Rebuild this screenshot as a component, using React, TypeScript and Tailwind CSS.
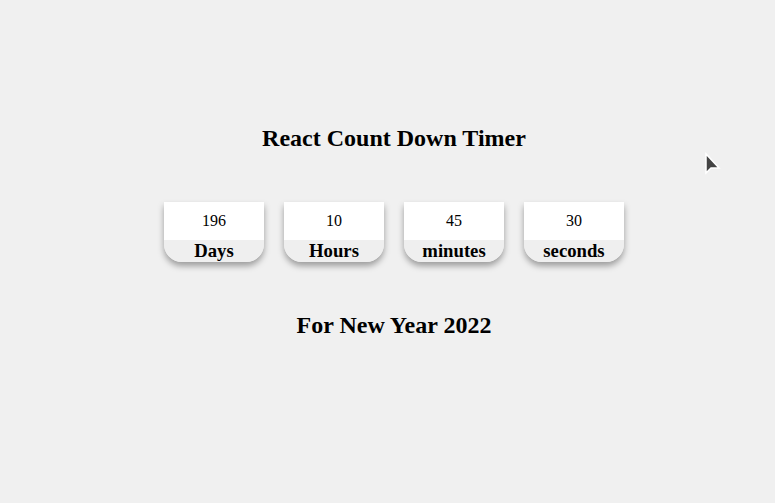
import React from 'react';

type Unit = {
  value: number;
  label: string;
};

const units: Unit[] = [
  { value: 196, label: 'Days' },
  { value: 10, label: 'Hours' },
  { value: 45, label: 'minutes' },
  { value: 30, label: 'seconds' },
];

function TimeBox({ value, label }: Unit) {
  return (
    <div className="w-[100px] rounded-b-[18px] overflow-hidden shadow-[0_4px_6px_rgba(0,0,0,0.35)]">
      <div className="h-[38px] bg-white flex items-center justify-center text-[16px] leading-none text-black">
        {value}
      </div>
      <div className="h-[22px] bg-[#efefef] flex items-center justify-center text-[18.72px] font-bold leading-none text-black">
        {label}
      </div>
    </div>
  );
}

export default function App() {
  return (
    <div
      className="relative w-full h-[503px] bg-[#f0f0f0] overflow-hidden"
      style={{ fontFamily: '"Liberation Serif", "Times New Roman", serif' }}
    >
      <div className="flex flex-col items-center pl-[13px] pt-[124px]">
        {/* Title */}
        <h2 className="text-[24px] font-bold leading-[28px] text-black">React Count Down Timer</h2>

        {/* Countdown boxes */}
        <div className="flex gap-5 mt-[50px]">
          {units.map((u) => (
            <TimeBox key={u.label} value={u.value} label={u.label} />
          ))}
        </div>

        <h2 className="mt-[49px] text-[24px] font-bold leading-[28px] text-black">For New Year 2022</h2>
      </div>

      {/* Mouse pointer */}
      <svg
        className="absolute left-[704px] top-[152px]"
        width="18"
        height="26"
        viewBox="0 0 18 26"
      >
        <polygon
          points="2,2 2,21 7,16 15,16"
          fill="#444"
          stroke="#fff"
          strokeWidth="1.5"
          strokeLinejoin="miter"
        />
      </svg>
    </div>
  );
}
